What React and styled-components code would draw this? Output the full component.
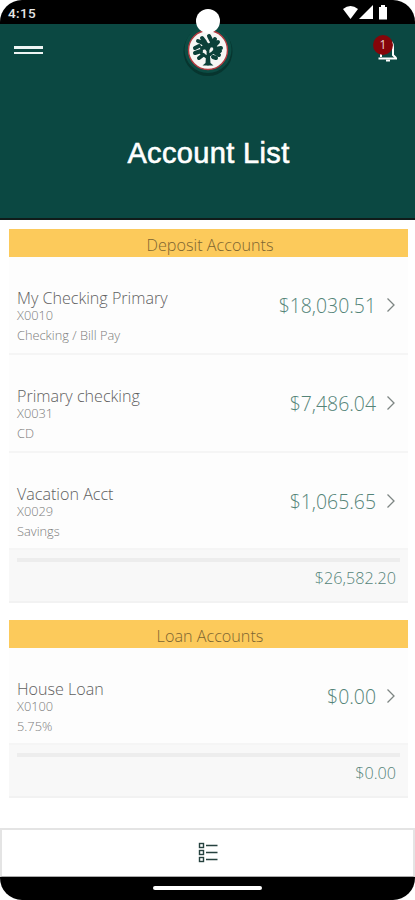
import React from 'react';
import styled, { createGlobalStyle } from 'styled-components';

const GlobalStyle = createGlobalStyle`
  * {
    box-sizing: border-box;
  }

  body {
    margin: 0;
    background: #fff;
    font-family: 'Open Sans', sans-serif;
    font-weight: 300;
  }
`;

const Screen = styled.div`
  position: relative;
  width: 415px;
  height: 900px;
  display: flex;
  flex-direction: column;
  overflow: hidden;
  background: #fff;
  border-radius: 22px;
`;

const StatusBar = styled.div`
  height: 24px;
  flex: none;
  display: flex;
  justify-content: space-between;
  padding: 0 27px 0 8px;
  background: #000;
`;

const Clock = styled.span`
  color: #e6e6e6;
  font: 500 13.5px/27px Roboto, sans-serif;
  letter-spacing: 0.4px;
`;

const StatusIcons = styled.svg`
  width: 46px;
  height: 24px;
`;

const Camera = styled.div`
  position: absolute;
  top: 9px;
  left: 196px;
  width: 24px;
  height: 24px;
  border-radius: 50%;
  background: #fff;
`;

const Header = styled.header`
  height: 196px;
  flex: none;
  background: #0b4842;
  border-bottom: 2px solid #101c1a;
`;

const Toolbar = styled.div`
  height: 60px;
  display: grid;
  grid-template-columns: 1fr 56px 1fr;
`;

const MenuButton = styled.button`
  width: 29px;
  height: 8px;
  margin: 22px 0 0 14px;
  padding: 0;
  border: solid #eef4f3;
  border-width: 3px 0 2px;
  background: none;
`;

const Logo = styled.svg`
  width: 56px;
  height: 56px;
`;

const BellButton = styled.button`
  position: relative;
  justify-self: end;
  width: 27px;
  height: 30px;
  margin: 9px 15px 0 0;
  padding: 0;
  border: 0;
  background: none;

  svg {
    display: block;
  }
`;

const Badge = styled.span`
  position: absolute;
  top: 2px;
  left: 0;
  width: 20px;
  height: 20px;
  border-radius: 50%;
  background: #850509;
  color: #e8d0d0;
  font: 400 12px/20px 'Open Sans', sans-serif;
  text-align: center;
`;

const Title = styled.h1`
  margin: 53px 0 0;
  padding-left: 2px;
  color: #fff;
  font: 400 29px/32px 'Liberation Sans', Arial, sans-serif;
  letter-spacing: 0.35px;
  text-align: center;
  -webkit-text-stroke: 0.6px #fff;
`;

const Content = styled.main`
  flex: 1;
  display: flex;
  flex-direction: column;
  gap: 17px;
  padding: 9px 7px 0 9px;
`;

const SectionTitle = styled.h2`
  height: 28px;
  margin: 0;
  background: #fcca5b;
  color: #7c6531;
  font-size: 16.2px;
  font-weight: 300;
  line-height: 33px;
  text-align: center;
  padding-left: 3px;
`;

const Row = styled.div`
  height: ${({ $last }) => ($last ? 97 : 98)}px;
  display: flex;
  justify-content: space-between;
  padding: 0 12px 0 8px;
  background: #fdfdfd;
  border-bottom: 2px solid #f5f5f5;
`;

const Details = styled.div`
  display: flex;
  flex-direction: column;
  padding-top: 30px;
`;

const Name = styled.span`
  color: #606060;
  font-size: 16.1px;
  line-height: 23px;
`;

const Meta = styled.span`
  margin-top: -1px;
  color: #7c7c7c;
  font-size: 12.8px;
  line-height: 12px;

  & + & {
    margin-top: 8px;
  }
`;

const Balance = styled.div`
  display: flex;
  align-items: center;
  gap: 10px;
  height: 97px;
  color: #548478;
  font-size: 19.4px;

  svg {
    display: block;
    margin-top: -1px;
  }
`;

const Total = styled.div`
  height: 53px;
  padding: 8px 8px 0;
  background: #f8f8f8;
  border-bottom: 2px solid #f2f2f2;
`;

const Rule = styled.div`
  height: 4px;
  background: #ededed;
`;

const TotalAmount = styled.div`
  padding-right: 4px;
  color: #558478;
  font-size: 16.2px;
  line-height: 32px;
  text-align: right;
`;

const BottomNav = styled.nav`
  height: 49px;
  flex: none;
  display: flex;
  align-items: center;
  justify-content: center;
  border: 2px solid #e4e4e4;
  border-bottom: 1px solid #aaa;
  background: #fff;
`;

const SystemBar = styled.div`
  height: 23px;
  flex: none;
  display: flex;
  justify-content: center;
  padding-top: 9px;
  background: #000;
`;

const HomeHandle = styled.div`
  width: 109px;
  height: 4px;
  border-radius: 2px;
  background: #fff;
`;

const sections = [
  {
    title: 'Deposit Accounts',
    total: '$26,582.20',
    accounts: [
      { name: 'My Checking Primary', number: 'X0010', type: 'Checking / Bill Pay', balance: '$18,030.51' },
      { name: 'Primary checking', number: 'X0031', type: 'CD', balance: '$7,486.04' },
      { name: 'Vacation Acct', number: 'X0029', type: 'Savings', balance: '$1,065.65' },
    ],
  },
  {
    title: 'Loan Accounts',
    total: '$0.00',
    accounts: [{ name: 'House Loan', number: 'X0100', type: '5.75%', balance: '$0.00' }],
  },
];

const TreeLogo = () => (
  <Logo viewBox="0 0 56 56">
    <circle cx="28" cy="27.5" r="24.5" fill="#07352f" />
    <circle cx="28" cy="25.5" r="23.5" fill="#0c4c44" />
    <circle cx="28" cy="26" r="19.5" fill="#f6f6f4" stroke="#b23b40" strokeWidth="1.4" />
    <g fill="none" stroke="#0b4039" strokeLinecap="round">
      <path d="M28 40V26M28 34l-7-5M28 32l7-5M28 27l-5-7M28 26l4-9" strokeWidth="2.8" />
      <path
        d="M15 24l4-2M15 29l6-2M18 17l5 2M22 14l3 4M29 12l2 4M35 15l-2 5M38 18l-4 4M41 24l-6 1M39 31l-5-3M22 24l4-1M30 21l5 1M19 34l4-3M33 33l3 1M25 19l4 3M37 28l3-1"
        strokeWidth="4"
      />
    </g>
    <path d="M26 32h4l.5 7 3 2.5H22.500l3-2.500z" fill="#0b4039" />
  </Logo>
);

const Bell = () => (
  <svg width="27" height="30" viewBox="0 0 27 30" fill="none" stroke="#fff">
    <path d="M8 24V15c0-5 3-7 7-7 3 0 5 2 5 6v8l3 3" strokeWidth="2" />
    <path d="M5.500 25.500h18.500" strokeWidth="2.2" />
    <path d="M13 27.500h4" strokeWidth="2" />
  </svg>
);

const Chevron = () => (
  <svg width="10" height="16" viewBox="0 0 10 16" fill="none" stroke="#7d8583" strokeWidth="1.3">
    <path d="M1.5 1.5L8 8l-6.5 6.5" />
  </svg>
);

const ListIcon = () => (
  <svg width="22" height="22" viewBox="0 0 22 22" fill="none" stroke="#26423f">
    {[3, 10, 17].map((y) => (
      <g key={y}>
        <rect x="2.5" y={y - 1.5} width="4" height="4" strokeWidth="1.4" />
        <path d={`M9 ${y + 0.5}h11.500`} strokeWidth="1.5" />
      </g>
    ))}
  </svg>
);

const AccountRow = ({ account, last }) => (
  <Row $last={last}>
    <Details>
      <Name>{account.name}</Name>
      <Meta>{account.number}</Meta>
      <Meta>{account.type}</Meta>
    </Details>
    <Balance>
      {account.balance}
      <Chevron />
    </Balance>
  </Row>
);

const App = () => (
  <>
    <GlobalStyle />
    <Screen>
      <StatusBar>
        <Clock>4:15</Clock>
        <StatusIcons viewBox="0 0 46 24" fill="#fff">
          <path d="M1 9q7.500-6 15 0l-7.500 10z" />
          <path d="M31 5v14H17z" />
          <path d="M37 7h2V5h4v2h2v12.500h-8z" />
        </StatusIcons>
      </StatusBar>

      <Header>
        <Toolbar>
          <MenuButton aria-label="Menu" />
          <TreeLogo />
          <BellButton aria-label="Notifications">
            <Bell />
            <Badge>1</Badge>
          </BellButton>
        </Toolbar>
        <Title>Account List</Title>
      </Header>

      <Content>
        {sections.map(({ title, total, accounts }) => (
          <section key={title}>
            <SectionTitle>{title}</SectionTitle>
            {accounts.map((account, i) => (
              <AccountRow key={account.number} account={account} last={i === accounts.length - 1} />
            ))}
            <Total>
              <Rule />
              <TotalAmount>{total}</TotalAmount>
            </Total>
          </section>
        ))}
      </Content>

      <BottomNav>
        <ListIcon />
      </BottomNav>
      <SystemBar>
        <HomeHandle />
      </SystemBar>
      <Camera />
    </Screen>
  </>
);

export default App;
